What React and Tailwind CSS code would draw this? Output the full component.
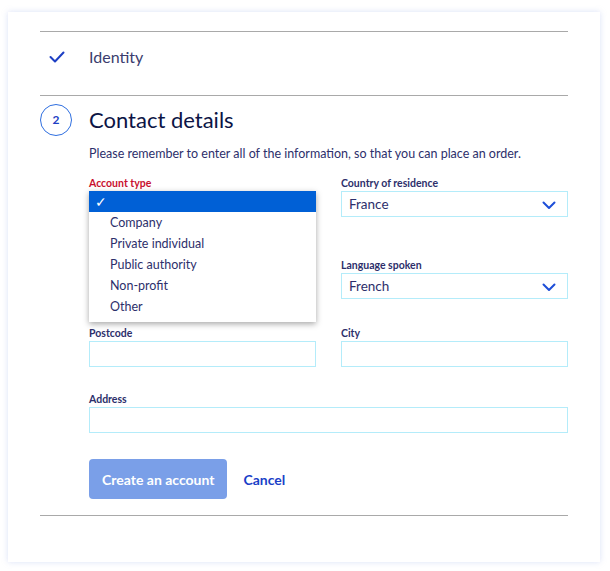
const font = { fontFamily: "Lato, 'Noto Sans', sans-serif" };

function Chevron() {
  return (
    <svg width="14" height="9" viewBox="0 0 14 9" fill="none" className="absolute right-[11px] top-[9px]">
      <path d="M1.5 1.5 L7 7 L12.5 1.5" stroke="#1d4ed8" strokeWidth="2" strokeLinecap="round" strokeLinejoin="round" />
    </svg>
  );
}

function Field({ label, value, select, red, className = "" }) {
  return (
    <div className={"flex flex-col " + className}>
      <div className={"text-[10.5px] font-bold leading-[14px] h-[14px] " + (red ? "text-[#c8102e]" : "text-[#2d2f6b]")}>
        {label}
      </div>
      <div
        className={
          "relative mt-[1px] h-[26px] border bg-white px-[7px] text-[13.5px] leading-[24px] text-[#2d2f6b] " +
          (red ? "border-[#e8a2ac]" : "border-[#b4ecfa]")
        }
      >
        {value}
        {select && <Chevron />}
      </div>
    </div>
  );
}

const options = ["Company", "Private individual", "Public authority", "Non-profit", "Other"];

export default function App() {
  return (
    <div className="min-h-screen bg-white pt-[12px] pb-[10px] pl-[8px] pr-[10px]" style={font}>
      <div className="bg-white shadow-[0_0_6px_rgba(150,170,230,0.35)] px-[32px] pt-[19px] pb-[46px]">
        <div className="border-t border-[#a9a9a9]" />
        <div className="flex items-start h-[63px] pt-[15px]">
          <svg width="16" height="12" viewBox="0 0 16 12" className="ml-[9px] mt-[4px]">
            <path d="M1.5 6 L6 10.5 L14.5 1.5" stroke="#1d3fc4" strokeWidth="2" fill="none" strokeLinecap="round" strokeLinejoin="round" />
          </svg>
          <span className="ml-[24px] text-[16px] leading-[20px] text-[#3b3d6e]">Identity</span>
        </div>
        <div className="border-t border-[#a9a9a9]" />
        <div className="flex items-center mt-[8px]">
          <div className="w-[32px] h-[32px] rounded-full border-[1.5px] border-[#2f6fe0] flex items-center justify-center text-[12px] font-bold text-[#1d3fc4]">
            2
          </div>
          <h2 className="ml-[17px] text-[22px] text-[#0c1445] leading-[32px]">Contact details</h2>
        </div>
        <div className="pl-[49px]">
          <p className="mt-[9px] text-[12.5px] text-[#2d2f6b] leading-[18px]">
            Please remember to enter all of the information, so that you can place an order.
          </p>
          <div className="relative mt-[13px]">
            <div className="grid grid-cols-2 gap-x-[25px]">
              <Field label="Account type" value="" red />
              <Field label="Country of residence" value="France" select />
              <Field label="" value="" className="mt-[41px]" />
              <Field label="Language spoken" value="French" select className="mt-[41px]" />
              <Field label="Postcode" value="" className="mt-[27px]" />
              <Field label="City" value="" className="mt-[27px]" />
              <Field label="Address" value="" className="col-span-2 mt-[25px]" />
            </div>
            <div className="absolute left-0 top-[15px] w-[227px] bg-white shadow-[0_2px_6px_rgba(0,0,0,0.35)] pb-[5px]">
              <div className="h-[21px] bg-[#0060d6] text-white text-[14px] leading-[21px] pl-[6px]">✓</div>
              {options.map((o) => (
                <div key={o} className="h-[21px] text-[12.5px] leading-[21px] pl-[21px] text-[#2d2f6b]">
                  {o}
                </div>
              ))}
            </div>
          </div>
          <div className="flex items-center mt-[26px]">
            <button className="h-[40px] px-[13px] rounded-[4px] bg-[#7a9fe8] text-white text-[14px] font-bold">
              Create an account
            </button>
            <button className="ml-[16px] text-[14px] font-bold text-[#1a3fc8]">Cancel</button>
          </div>
        </div>
        <div className="border-t border-[#a9a9a9] mt-[16px]" />
      </div>
    </div>
  );
}
